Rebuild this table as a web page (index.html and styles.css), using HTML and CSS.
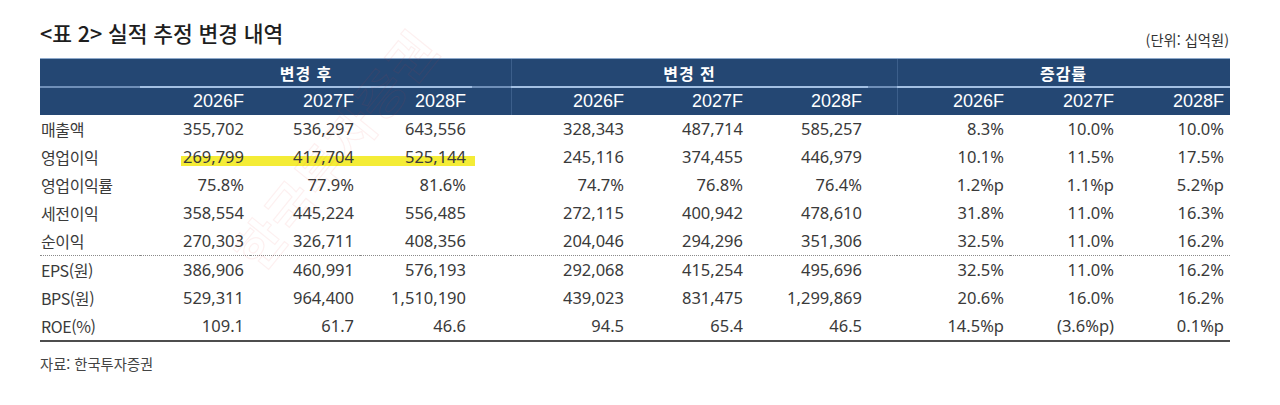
FILE: index.html
```html
<!DOCTYPE html>
<html lang="ko">
<head>
<meta charset="utf-8">
<title>실적 추정 변경 내역</title>
<link rel="stylesheet" href="styles.css">
</head>
<body>
<div class="page">
  <div class="top">
    <h1 class="title">&lt;표 2&gt; 실적 추정 변경 내역</h1>
    <div class="unit">(단위: 십억원)</div>
  </div>
  <table class="tbl">
    <colgroup>
      <col class="w-label"><col class="w110"><col class="w110"><col class="w112">
      <col class="w-sp1"><col class="w119"><col class="w119"><col class="w119">
      <col class="w-sp2"><col class="w113"><col class="w110"><col class="w110">
    </colgroup>
    <thead>
      <tr class="h1">
        <th class="dim"></th>
        <th colspan="3" class="grp">변경 후</th>
        <th class="dim"></th>
        <th colspan="3" class="grp sep">변경 전</th>
        <th class="dim"></th>
        <th colspan="3" class="grp sep">증감률</th>
      </tr>
      <tr class="h2">
        <th></th>
        <th>2026F</th><th>2027F</th><th>2028F</th>
        <th></th>
        <th class="sep">2026F</th><th>2027F</th><th>2028F</th>
        <th></th>
        <th class="sep">2026F</th><th>2027F</th><th>2028F</th>
      </tr>
    </thead>
    <tbody>
      <tr>
        <td class="lbl">매출액</td>
        <td>355,702</td><td>536,297</td><td>643,556</td><td></td>
        <td>328,343</td><td>487,714</td><td>585,257</td><td></td>
        <td>8.3%</td><td>10.0%</td><td>10.0%</td>
      </tr>
      <tr>
        <td class="lbl">영업이익</td>
        <td class="hl hl-start">269,799</td><td class="hl">417,704</td><td class="hl">525,144</td><td class="hl hl-end"></td>
        <td>245,116</td><td>374,455</td><td>446,979</td><td></td>
        <td>10.1%</td><td>11.5%</td><td>17.5%</td>
      </tr>
      <tr>
        <td class="lbl">영업이익률</td>
        <td>75.8%</td><td>77.9%</td><td>81.6%</td><td></td>
        <td>74.7%</td><td>76.8%</td><td>76.4%</td><td></td>
        <td>1.2%p</td><td>1.1%p</td><td>5.2%p</td>
      </tr>
      <tr>
        <td class="lbl">세전이익</td>
        <td>358,554</td><td>445,224</td><td>556,485</td><td></td>
        <td>272,115</td><td>400,942</td><td>478,610</td><td></td>
        <td>31.8%</td><td>11.0%</td><td>16.3%</td>
      </tr>
      <tr class="dotted">
        <td class="lbl">순이익</td>
        <td>270,303</td><td>326,711</td><td>408,356</td><td></td>
        <td>204,046</td><td>294,296</td><td>351,306</td><td></td>
        <td>32.5%</td><td>11.0%</td><td>16.2%</td>
      </tr>
      <tr>
        <td class="lbl">EPS(원)</td>
        <td>386,906</td><td>460,991</td><td>576,193</td><td></td>
        <td>292,068</td><td>415,254</td><td>495,696</td><td></td>
        <td>32.5%</td><td>11.0%</td><td>16.2%</td>
      </tr>
      <tr>
        <td class="lbl">BPS(원)</td>
        <td>529,311</td><td>964,400</td><td>1,510,190</td><td></td>
        <td>439,023</td><td>831,475</td><td>1,299,869</td><td></td>
        <td>20.6%</td><td>16.0%</td><td>16.2%</td>
      </tr>
      <tr class="last">
        <td class="lbl">ROE(%)</td>
        <td>109.1</td><td>61.7</td><td>46.6</td><td></td>
        <td>94.5</td><td>65.4</td><td>46.5</td><td></td>
        <td>14.5%p</td><td>(3.6%p)</td><td>0.1%p</td>
      </tr>
    </tbody>
  </table>
  <div class="source">자료: 한국투자증권</div>
  <div class="watermark">한국투자증권</div>
</div>
</body>
</html>
```

FILE: styles.css
```css
* { box-sizing: border-box; }
html, body { margin: 0; padding: 0; background: #ffffff; }
body {
  font-family: "Noto Sans", "Noto Sans CJK KR", sans-serif;
  color: #3a3a3a;
}
.page {
  position: relative;
  width: 1280px;
  height: 405px;
  padding: 18px 0 0 40px;
  overflow: hidden;
}
.top {
  width: 1190px;
  height: 30px;
  display: flex;
  justify-content: space-between;
  align-items: flex-end;
  margin-bottom: 10px;
}
.title {
  margin: 0;
  font-family: "Noto Sans CJK KR", sans-serif;
  font-size: 21.5px;
  font-weight: 500;
  line-height: 30px;
  color: #1e1e1e;
  letter-spacing: -0.1px;
}
.unit {
  font-family: "Noto Sans CJK KR", sans-serif;
  font-size: 14.3px;
  line-height: 18px;
  color: #333;
  padding-right: 1px;
  margin-bottom: -1px;
}
.tbl {
  width: 1190px;
  table-layout: fixed;
  border-collapse: separate;
  border-spacing: 0;
}
.w-label { width: 100px; }
.w110 { width: 110px; }
.w112 { width: 112px; }
.w113 { width: 113px; }
.w119 { width: 119px; }
.w-sp1 { width: 39px; }
.w-sp2 { width: 29px; }

thead th {
  background: #244773;
  color: #ffffff;
  padding: 0 6px 0 0;
  font-weight: normal;
}
.h1 th {
  height: 30px;
  border-top: 1px solid #8ea9cb;
  border-bottom: 2px solid #6f8fb8;
  font-family: "Noto Sans CJK KR", sans-serif;
  font-size: 16px;
  font-weight: 700;
  letter-spacing: 1px;
  text-align: center;
  padding: 0;
  line-height: 26px;
}
.h1 th.grp { border-bottom-color: #a3c0e3; }
.h2 th {
  height: 27px;
  font-family: "Liberation Sans", Arial, sans-serif;
  font-size: 18px;
  text-align: right;
  line-height: 27px;
}
thead th.sep { box-shadow: inset 1px 0 0 #3c5f8b; }

tbody td {
  height: 28px;
  padding: 0 6px 0 0;
  text-align: right;
  font-size: 16.5px;
  line-height: 28px;
  white-space: nowrap;
  color: #3a3a3a;
}
tbody td.lbl {
  text-align: left;
  padding: 0 0 0 1px;
  font-family: "Noto Sans CJK KR", sans-serif;
  font-size: 16px;
  letter-spacing: -0.4px;
}
tbody tr.dotted td { border-bottom: 1px dotted #8a8a8a; }
tbody tr.last td { border-bottom: 2px solid #4d4d4d; }

td.hl {
  background-image: linear-gradient(to bottom, transparent 13px, #f4ec36 13px, #f4ec36 23px, transparent 23px);
  background-repeat: no-repeat;
}
td.hl-start {
  background-size: calc(100% - 41px) 100%;
  background-position: right top;
}
td.hl-end {
  background-size: 3px 100%;
  background-position: left top;
}

.source {
  margin-top: 13px;
  font-family: "Noto Sans CJK KR", sans-serif;
  font-size: 14.3px;
  line-height: 18px;
  color: #444;
}
.watermark {
  position: absolute;
  left: 190px;
  top: 112px;
  font-family: "Noto Sans CJK KR", sans-serif;
  font-size: 50px;
  font-weight: 700;
  letter-spacing: 2px;
  color: transparent;
  -webkit-text-stroke: 1.2px rgba(235, 70, 70, 0.08);
  transform: rotate(-51deg);
  transform-origin: center center;
  pointer-events: none;
  white-space: nowrap;
}
```
